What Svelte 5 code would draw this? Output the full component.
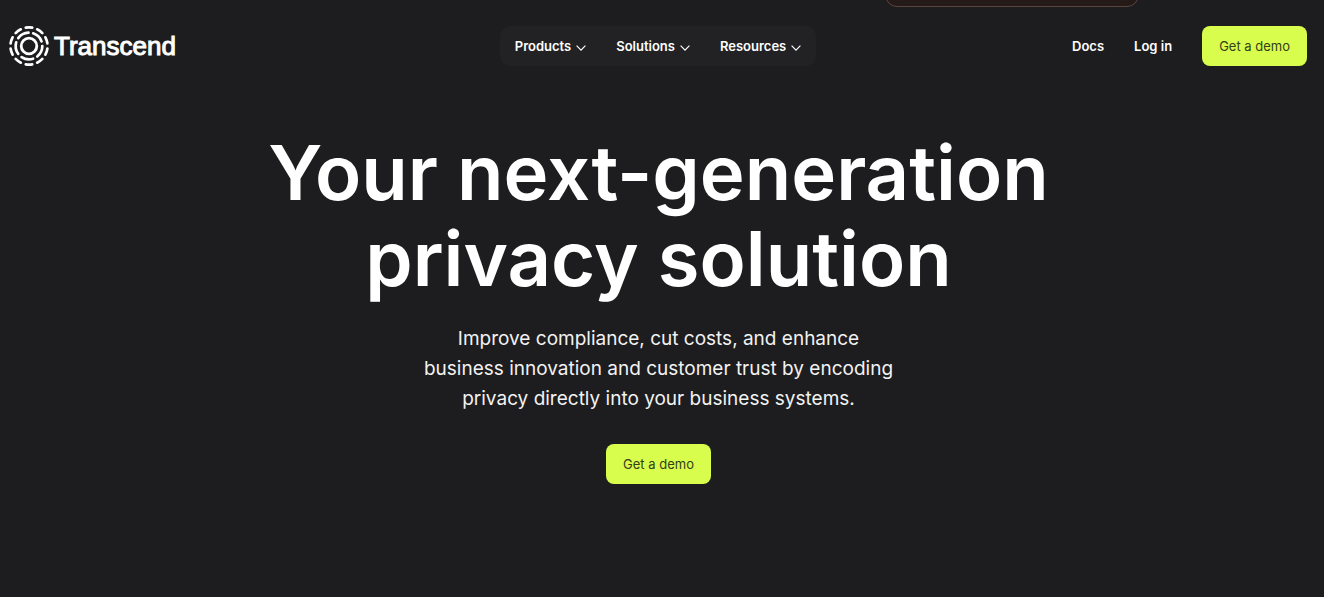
<script>
  const menus = ['Products', 'Solutions', 'Resources'];
  const outer = Array.from({ length: 10 }, (_, i) => i * 36);
  const middle = Array.from({ length: 5 }, (_, i) => i * 72 + 44);
</script>

<div class="page">
  <div class="notice" aria-hidden="true"></div>

  <header>
    <a class="brand" href="/">
      <svg width="40" height="40" viewBox="-20 -20 40 40" fill="none" stroke="#fff" stroke-linecap="round" aria-hidden="true">
        <circle r="7.8" stroke-width="2.8" />
        {#each middle as angle}
          <path d="M-5.8 -12A13.3 13.3 0 0 1 5.8 -12" stroke-width="2.7" transform="rotate({angle})" />
        {/each}
        {#each outer as angle}
          <path d="M-3.2 -18.3A18.6 18.6 0 0 1 3.2 -18.3" stroke-width="2.7" transform="rotate({angle})" />
        {/each}
      </svg>
      <span>Transcend</span>
    </a>

    <nav aria-label="Main">
      {#each menus as menu}
        <button type="button" class="menu">
          {menu}
          <svg width="10" height="6" viewBox="0 0 10 6" fill="none" stroke="currentColor" stroke-width="1.2" aria-hidden="true">
            <path d="M.6 .7L5 5.1L9.4 .7" />
          </svg>
        </button>
      {/each}
    </nav>

    <div class="actions">
      <a href="/docs">Docs</a>
      <a href="/login">Log in</a>
      <a class="demo" href="/demo">Get a demo</a>
    </div>
  </header>

  <main>
    <h1>Your next-generation<br />privacy solution</h1>
    <p>Improve compliance, cut costs, and enhance<br />business innovation and customer trust by encoding<br />privacy directly into your business systems.</p>
    <a class="demo" href="/demo">Get a demo</a>
  </main>
</div>

<style>
  :global(body) {
    background: #1d1d1f;
  }

  .page {
    position: relative;
    padding-right: 7px;
    color: #fff;
    font-family: Inter, "Liberation Sans", sans-serif;
    font-size: 14px;
    line-height: 20px;
  }

  .notice {
    position: absolute;
    top: -34px;
    right: 185px;
    box-sizing: border-box;
    width: 254px;
    height: 41px;
    border: 1px solid #5c443c;
    border-radius: 12px;
    background: #241a17;
  }

  header {
    display: grid;
    grid-template-columns: 1fr auto 1fr;
    align-items: center;
    padding: 26px 10px 0 9px;
  }

  a {
    color: inherit;
    text-decoration: none;
  }

  .brand {
    display: flex;
    align-items: center;
    gap: 5px;
    font: 26px/40px "Liberation Sans", Arial, sans-serif;
    -webkit-text-stroke: 1px #fff;
  }

  nav {
    display: flex;
    gap: 30px;
    padding: 0 15px;
    border-radius: 10px;
    background: #222225;
  }

  .menu {
    display: flex;
    align-items: center;
    gap: 5px;
    padding: 0;
    border: 0;
    background: none;
    color: inherit;
    font: 600 13px/40px Inter, "Liberation Sans", sans-serif;
    cursor: pointer;
  }

  .menu svg {
    margin-top: 4px;
  }

  .actions {
    display: flex;
    align-items: center;
    justify-content: flex-end;
    gap: 30px;
    font-size: 13px;
    font-weight: 600;
  }

  .demo {
    padding: 10px 17px;
    border-radius: 8px;
    background: #d9fd4c;
    color: #33401a;
    font-size: 13px;
    font-weight: 400;
  }

  main {
    display: flex;
    flex-direction: column;
    align-items: center;
    padding: 63px 16px 112px;
    text-align: center;
  }

  h1 {
    margin: 0;
    font-size: 76px;
    font-weight: 600;
    line-height: 86px;
  }

  p {
    margin: 23px 0 30px;
    color: #f2f2f2;
    font-size: 19px;
    line-height: 30px;
  }
</style>
